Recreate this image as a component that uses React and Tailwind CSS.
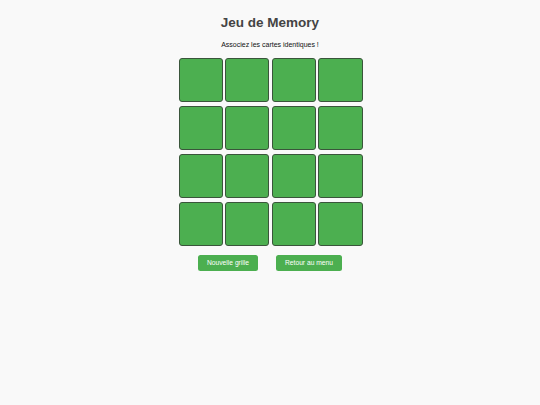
import React from "react";

export default function App() {
  const cards = Array.from({ length: 16 }, (_, i) => i);
  return (
    <div
      className="min-h-[405px] w-full bg-[#f9f9f9] flex flex-col items-center pt-[15px]"
      style={{ fontFamily: '"Liberation Sans", Arial, sans-serif' }}
    >
      <h1 className="text-[13.5px] leading-[16px] font-bold text-[#444]">Jeu de Memory</h1>
      <p className="mt-[10px] text-[7px] leading-[8px] text-[#111]">Associez les cartes identiques !</p>
      <div className="mt-[9px] w-[184px] ml-[1px] grid grid-cols-4 gap-x-[2.6px] gap-y-[4px]">
        {cards.map((i) => (
          <div
            key={i}
            className="h-[44px] bg-[#4caf50] border border-[#3a553b] rounded-[3px]"
          />
        ))}
      </div>
      <div className="mt-[9px] flex gap-[18px]">
        <button className="h-[16px] px-[9px] bg-[#4caf50] text-white text-[6.7px] leading-[16px] rounded-[2.5px]">
          Nouvelle grille
        </button>
        <button className="h-[16px] px-[9px] bg-[#4caf50] text-white text-[6.7px] leading-[16px] rounded-[2.5px]">
          Retour au menu
        </button>
      </div>
    </div>
  );
}
